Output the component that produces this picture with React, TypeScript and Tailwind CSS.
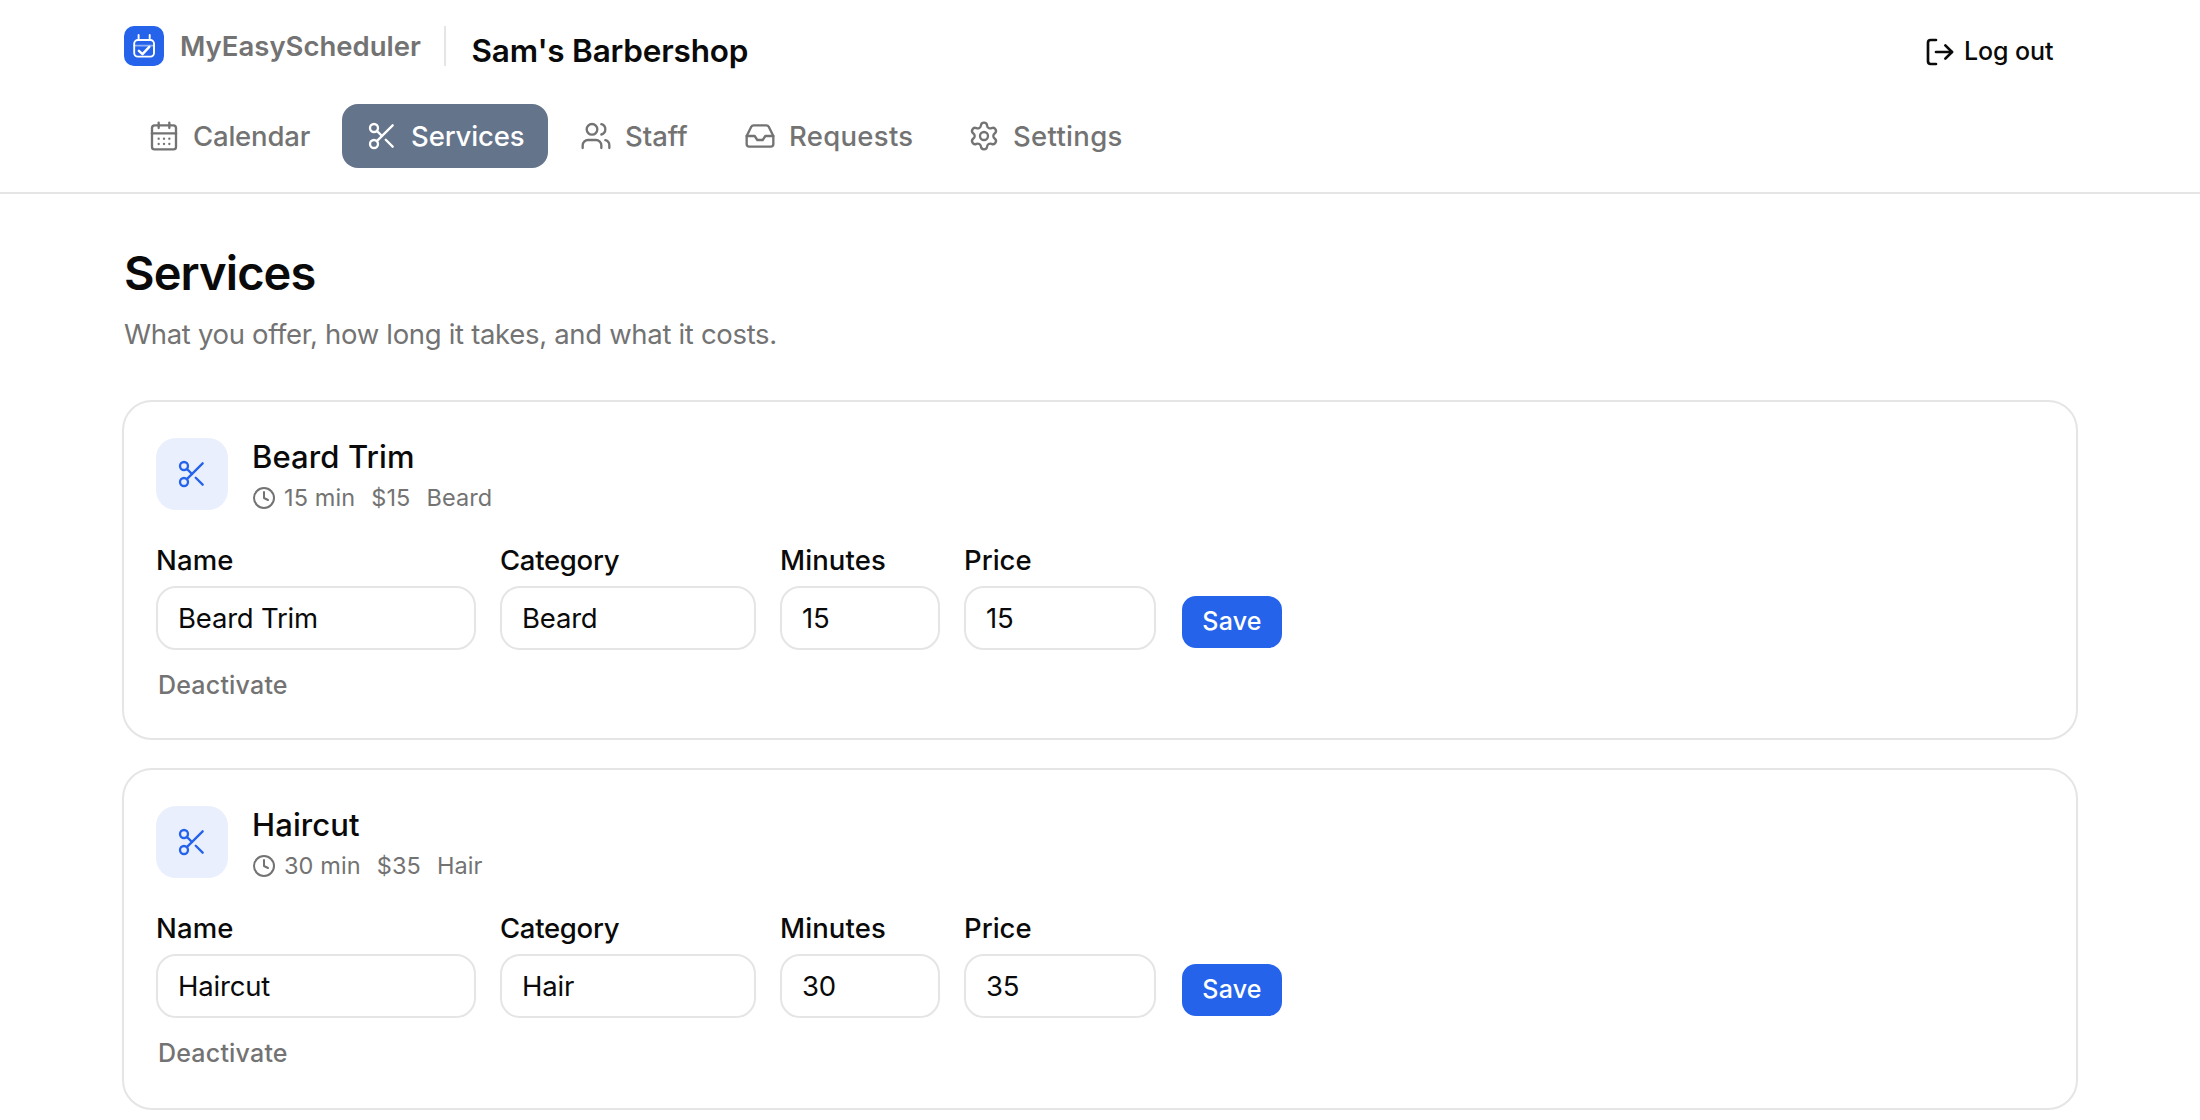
import { CalendarDays, Clock, Inbox, LogOut, Scissors, Settings, Users } from "lucide-react"

const navItems = [
  { label: "Calendar", icon: CalendarDays, spacing: "w-[118px] tracking-[-0.2px]" },
  { label: "Services", icon: Scissors, spacing: "w-[114px] tracking-[-0.13px]", active: true },
  { label: "Staff", icon: Users, spacing: "w-[64px]" },
  { label: "Requests", icon: Inbox, spacing: "w-[124px] tracking-[0.3px]" },
  { label: "Settings", icon: Settings, spacing: "w-[110px] tracking-[0.3px]" },
]

const services = [
  { name: "Beard Trim", category: "Beard", minutes: 15, price: 15 },
  { name: "Haircut", category: "Hair", minutes: 30, price: 35 },
]

function Logo() {
  return (
    <div className="size-10 rounded-[10px] bg-[#2563eb]">
      <svg viewBox="0 0 40 40" className="size-10" fill="none" stroke="white" strokeLinecap="round" strokeLinejoin="round">
        <rect x="10.2" y="14" width="19.8" height="16.6" rx="3.6" strokeWidth="1.9" />
        <path d="M10.5 19.7h19.2" strokeWidth="1.8" opacity="0.5" />
        <path d="M14.6 9v4.6M25.7 9v4.6" strokeWidth="1.9" />
        <path d="M14.9 24.9l3.6 3.2 6.8-7.2" strokeWidth="2.5" />
      </svg>
    </div>
  )
}

function Header() {
  return (
    <header className="border-b-2 border-[#e5e5e5] px-[124px] pt-[26px] pb-6">
      <div className="flex h-[78px] items-start">
        <Logo />
        <span className="ml-4 w-[241px] text-[27.5px] leading-10 font-semibold text-[#737373]">MyEasyScheduler</span>
        <div className="ml-[23px] h-10 w-0.5 bg-[#e5e5e5]" />
        <span className="mt-[4.5px] ml-[25.5px] text-[31.5px] leading-10 font-semibold tracking-[-0.2px]">Sam's Barbershop</span>
        <button className="mt-1.5 mr-5 ml-auto flex h-10 items-center gap-2 text-[25px] font-medium">
          <LogOut className="size-8" strokeWidth={2} />
          <span className="w-[92px] text-left tracking-[-0.1px]">Log out</span>
        </button>
      </div>

      {/* Primary navigation */}
      <nav className="flex gap-2">
        {navItems.map(({ label, icon: Icon, spacing, active }) => (
          <a
            key={label}
            className={`flex h-16 items-center rounded-2xl px-6 text-[27.5px] font-medium ${
              active ? "bg-[#64748b] text-white" : "text-[#737373]"
            }`}
          >
            <Icon className="size-8" strokeWidth={1.75} />
            <span className={`mt-0.5 -mr-px ml-[13px] whitespace-nowrap ${spacing}`}>{label}</span>
          </a>
        ))}
      </nav>
    </header>
  )
}

function Field({ label, value, width, spacing }: { label: string; value: string | number; width: string; spacing: string }) {
  return (
    <label className={`flex flex-col gap-2 ${width}`}>
      <span className={`text-[27.5px] leading-9 font-medium ${spacing}`}>{label}</span>
      <input
        defaultValue={value}
        className="h-16 w-full rounded-[20px] border-2 border-[#e5e5e5] px-5 text-[27.5px] tracking-[-0.2px]"
      />
    </label>
  )
}

function ServiceCard({ service }: { service: (typeof services)[number] }) {
  return (
    <section className="h-[340px] rounded-[30px] border-2 border-[#e5e5e5] px-8 pt-9 last:h-[342px]">
      <div className="flex h-[72px] gap-6">
        <div className="flex size-[72px] items-center justify-center rounded-[20px] bg-[#e9effd] text-[#2563eb]">
          <Scissors className="size-8" strokeWidth={1.75} />
        </div>
        <div className="-mt-px">
          <h2 className="text-[31px] leading-10 font-medium tracking-[0.1px]">{service.name}</h2>
          <div className="mt-[5px] flex h-8 items-center gap-4 text-[23.5px] tracking-[0.1px] text-[#737373]">
            <span className="flex items-center gap-2">
              <Clock className="size-6" strokeWidth={2} />
              {service.minutes} min
            </span>
            <span>${service.price}</span>
            <span>{service.category}</span>
          </div>
        </div>
      </div>

      <div className="mt-8 flex items-end gap-6">
        <Field label="Name" value={service.name} width="w-[320px]" spacing="tracking-[0.15px]" />
        <Field label="Category" value={service.category} width="w-[256px]" spacing="tracking-[-0.3px]" />
        <Field label="Minutes" value={service.minutes} width="w-[160px]" spacing="tracking-[0.1px]" />
        <Field label="Price" value={service.price} width="w-[192px]" spacing="tracking-[0px]" />
        <button className="mb-0.5 ml-0.5 h-[52px] w-[100px] rounded-[14px] bg-[#2563eb] text-[25px] font-medium tracking-[0.18px] text-white">
          Save
        </button>
      </div>

      <button className="mt-[17px] ml-0.5 block text-[25px] leading-9 font-medium tracking-[0.2px] text-[#737373]">
        Deactivate
      </button>
    </section>
  )
}

export default function App() {
  return (
    <div className="h-[1120px] overflow-hidden bg-white font-['Inter',sans-serif] text-[#0a0a0a]">
      <Header />
      <main className="px-[122px] pt-[49px]">
        <h1 className="ml-0.5 text-[47px] leading-[60px] font-semibold tracking-[-0.9px]">Services</h1>
        <p className="mt-[11px] ml-0.5 text-[27.5px] leading-10 tracking-[-0.32px] text-[#737373]">
          What you offer, how long it takes, and what it costs.
        </p>
        <div className="mt-[46px] flex flex-col gap-7">
          {services.map((service) => (
            <ServiceCard key={service.name} service={service} />
          ))}
        </div>
      </main>
    </div>
  )
}
